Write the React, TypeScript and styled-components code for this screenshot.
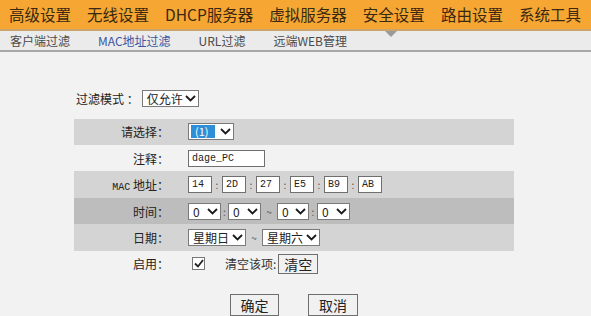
import React from "react";
import styled, { createGlobalStyle } from "styled-components";

const Global = createGlobalStyle`
  html, body { margin: 0; padding: 0; background: #f2f2f2; }
  body { width: 591px; height: 316px; overflow: hidden; font-family: "Noto Sans CJK SC", "Liberation Sans", sans-serif; }
`;

const Page = styled.div`
  width: 591px;
  height: 316px;
  background: #f2f2f2;
  display: flex;
  flex-direction: column;
`;

const TopBar = styled.div`
  height: 29px;
  background: #f6a733;
  border-bottom: 2px solid #c9a46c;
  display: flex;
  align-items: center;
  justify-content: space-between;
  padding: 0 10px 0 9px;
`;

const TopItem = styled.span`
  font-size: 15.5px;
  color: #3a2810;
  line-height: 29px;
  white-space: nowrap;
`;

const SubBar = styled.div`
  position: relative;
  height: 24px;
  background: #ebebeb;
  border-bottom: 2px solid #a8a8a8;
  display: flex;
  align-items: center;
  gap: 28px;
  padding-left: 10px;
`;

const SubItem = styled.span<{ $active?: boolean }>`
  font-size: 12px;
  white-space: nowrap;
  color: ${(p) => (p.$active ? "#3d55a0" : "#4a4a4a")};
`;

const Pointer = styled.div`
  position: absolute;
  left: 385px;
  top: 0;
  width: 0;
  height: 0;
  border-left: 6px solid transparent;
  border-right: 6px solid transparent;
  border-top: 6px solid #9a9a9a;
`;

const Content = styled.div`
  padding: 38px 0 0 74px;
  display: flex;
  flex-direction: column;
`;

const ModeLine = styled.div`
  display: flex;
  align-items: center;
  height: 17px;
  padding-left: 2px;
  font-size: 12px;
  color: #222;
  gap: 3px;
`;

const Table = styled.div`
  width: 440px;
  margin-top: 12px;
  display: flex;
  flex-direction: column;
`;

const Row = styled.div<{ $tone: "light" | "mid" | "dark" }>`
  height: 26.4px;
  display: flex;
  align-items: center;
  background: ${(p) =>
    p.$tone === "mid" ? "#d4d4d4" : p.$tone === "dark" ? "#bdbdbd" : "transparent"};
`;

const Label = styled.div`
  width: 114px;
  box-sizing: border-box;
  padding-right: 19px;
  text-align: right;
  font-size: 12px;
  color: #222;
  white-space: nowrap;
`;

const Mono = styled.span`
  font-family: "Liberation Mono", monospace;
  font-size: 10px;
`;

const Cell = styled.div`
  display: flex;
  align-items: center;
  font-size: 12px;
  color: #333;
  white-space: nowrap;
`;

const SelectBox = styled.div<{ $w: number }>`
  width: ${(p) => p.$w}px;
  height: 17px;
  box-sizing: border-box;
  background: #fff;
  border: 1px solid #7a7a7a;
  display: flex;
  align-items: center;
  justify-content: space-between;
  padding: 0 2px 0 2px;
  font-size: 12px;
  color: #222;
  flex-shrink: 0;
  svg { flex-shrink: 0; }
`;

const SelText = styled.span<{ $hl?: boolean }>`
  padding: 0 2px;
  height: 13px;
  line-height: 13px;
  white-space: nowrap;
  display: flex;
  align-items: center;
  ${(p) => (p.$hl ? "background:#2f8fd6;color:#fff;width:24px;font-size:11px;padding:0 4px;box-sizing:border-box;" : "")}
`;

const TextInput = styled.div<{ $w: number }>`
  width: ${(p) => p.$w}px;
  height: 17px;
  box-sizing: border-box;
  background: #fff;
  border: 1px solid #6f6f6f;
  font-family: "Liberation Mono", monospace;
  font-size: 10px;
  color: #222;
  display: flex;
  align-items: center;
  padding-left: 3px;
  flex-shrink: 0;
`;

const Sep = styled.span<{ $w: number }>`
  width: ${(p) => p.$w}px;
  text-align: center;
  font-size: 10px;
  color: #555;
  flex-shrink: 0;
`;

const Check = styled.div`
  width: 13px;
  height: 13px;
  box-sizing: border-box;
  border: 1px solid #777;
  background: #fff;
  margin: 0 20px 0 4px;
  display: flex;
  align-items: center;
  justify-content: center;
`;

const ClearLabel = styled.span`
  margin-right: 2px;
`;

const Btn = styled.div<{ $w: number; $h: number }>`
  width: ${(p) => p.$w}px;
  height: ${(p) => p.$h}px;
  box-sizing: border-box;
  background: #f1f1f1;
  border: 1px solid #6e6e6e;
  display: flex;
  align-items: center;
  justify-content: center;
  font-size: 14px;
  color: #222;
  flex-shrink: 0;
`;

const Buttons = styled.div`
  display: flex;
  gap: 29px;
  padding-left: 156px;
  margin-top: 17px;
`;

const Chevron = () => (
  <svg width="11" height="7" viewBox="0 0 11 7">
    <path d="M1 1 L5.5 5.5 L10 1" fill="none" stroke="#1a1a1a" strokeWidth="1.8" />
  </svg>
);

const Select = ({ w, text, hl }: { w: number; text: string; hl?: boolean }) => (
  <SelectBox $w={w}>
    <SelText $hl={hl}>{text}</SelText>
    <Chevron />
  </SelectBox>
);

const macs = ["14", "2D", "27", "E5", "B9", "AB"];

export default function App() {
  return (
    <Page>
      <Global />
      <TopBar>
        {["高级设置", "无线设置", "DHCP服务器", "虚拟服务器", "安全设置", "路由设置", "系统工具"].map((t) => (
          <TopItem key={t}>{t}</TopItem>
        ))}
      </TopBar>
      <SubBar>
        <Pointer />
        <SubItem>客户端过滤</SubItem>
        <SubItem $active>MAC地址过滤</SubItem>
        <SubItem>URL过滤</SubItem>
        <SubItem>远端WEB管理</SubItem>
      </SubBar>
      <Content>
        <ModeLine>
          <span>过滤模式 ：</span>
          <Select w={57} text="仅允许" />
        </ModeLine>
        <Table>
          <Row $tone="mid">
            <Label>请选择：</Label>
            <Cell>
              <Select w={46} text="(1)" hl />
            </Cell>
          </Row>
          <Row $tone="light">
            <Label>注释：</Label>
            <Cell>
              <TextInput $w={77}>dage_PC</TextInput>
            </Cell>
          </Row>
          <Row $tone="mid">
            <Label>
              <Mono>MAC</Mono> 地址：
            </Label>
            <Cell>
              {macs.map((m, i) => (
                <React.Fragment key={m}>
                  {i > 0 && <Sep $w={10}>:</Sep>}
                  <TextInput $w={24}>{m}</TextInput>
                </React.Fragment>
              ))}
            </Cell>
          </Row>
          <Row $tone="dark">
            <Label>时间：</Label>
            <Cell>
              <Select w={33} text="0" />
              <Sep $w={7}>:</Sep>
              <Select w={33} text="0" />
              <Sep $w={16}>~</Sep>
              <Select w={32} text="0" />
              <Sep $w={8}>:</Sep>
              <Select w={33} text="0" />
            </Cell>
          </Row>
          <Row $tone="mid">
            <Label>日期：</Label>
            <Cell>
              <Select w={58} text="星期日" />
              <Sep $w={16}>~</Sep>
              <Select w={58} text="星期六" />
            </Cell>
          </Row>
          <Row $tone="light">
            <Label>启用：</Label>
            <Cell>
              <Check>
                <svg width="10" height="9" viewBox="0 0 10 9">
                  <path d="M1 4.5 L4 7.5 L9 1" fill="none" stroke="#222" strokeWidth="1.8" />
                </svg>
              </Check>
              <ClearLabel>清空该项:</ClearLabel>
              <Btn $w={40} $h={20}>清空</Btn>
            </Cell>
          </Row>
        </Table>
        <Buttons>
          <Btn $w={49} $h={22}>确定</Btn>
          <Btn $w={50} $h={22}>取消</Btn>
        </Buttons>
      </Content>
    </Page>
  );
}
